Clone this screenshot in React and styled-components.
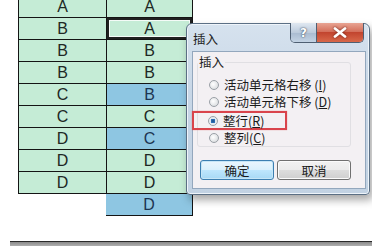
import React from "react";
import styled, { createGlobalStyle } from "styled-components";

const GlobalStyle = createGlobalStyle`
  html, body {
    margin: 0;
    padding: 0;
    background: #ffffff;
    overflow: hidden;
  }
  body {
    font-family: "Liberation Sans", Arial, sans-serif;
  }
`;

const col1 = ["A", "B", "B", "B", "C", "C", "D", "D", "D", null];
const col2 = [
  { v: "A" },
  { v: "A", active: true },
  { v: "B" },
  { v: "B" },
  { v: "B", blue: true },
  { v: "C" },
  { v: "C", blue: true },
  { v: "D" },
  { v: "D" },
  { v: "D", blue: true },
];

const radios = [
  { label: "活动单元格右移 ", key: "I" },
  { label: "活动单元格下移 ", key: "D" },
  { label: "整行", key: "R", checked: true },
  { label: "整列", key: "C" },
];

const App = () => {
  return (
    <>
      <GlobalStyle />
      <Page>
        <Sheet>
          <Grid>
            {col1.map((v, i) => (
              <React.Fragment key={i}>
                {v ? <Cell $first>{v}</Cell> : <Empty />}
                <Cell
                  $blue={col2[i].blue}
                  $active={col2[i].active}
                  $lone={!v}
                >
                  {col2[i].v}
                </Cell>
              </React.Fragment>
            ))}
          </Grid>
        </Sheet>
        <BottomRule />

        <Dialog>
          <TitleText>插入</TitleText>
          <Caption>
            <HelpBtn>?</HelpBtn>
            <CloseBtn>
              <svg width="14" height="11" viewBox="0 0 14 11">
                <path
                  d="M2 1.5 L12 9.5 M12 1.5 L2 9.5"
                  stroke="#ffffff"
                  strokeWidth="2.8"
                  strokeLinecap="round"
                />
              </svg>
            </CloseBtn>
          </Caption>
          <Client>
            <GroupBox>
              <Legend>插入</Legend>
              <RadioList>
                {radios.map((r) => (
                  <RadioRow key={r.key} $hl={r.checked}>
                    <RadioDot $checked={r.checked} />
                    <RadioText>
                      {r.label}(<u>{r.key}</u>)
                    </RadioText>
                  </RadioRow>
                ))}
              </RadioList>
            </GroupBox>
            <Buttons>
              <PushButton $default>确定</PushButton>
              <PushButton>取消</PushButton>
            </Buttons>
          </Client>
        </Dialog>
      </Page>
    </>
  );
};

const Page = styled.div`
  position: relative;
  width: 372px;
  height: 246px;
  overflow: hidden;
`;

const Sheet = styled.div`
  padding-left: 18px;
  margin-top: -4px;
`;

const Grid = styled.div`
  display: grid;
  grid-template-columns: 89px 86px;
  grid-auto-rows: 22px;
`;

const Empty = styled.div``;

const Cell = styled.div`
  box-sizing: border-box;
  display: flex;
  align-items: center;
  justify-content: center;
  padding-top: 1px;
  font-size: 16px;
  line-height: 18px;
  color: ${(p) => (p.$blue ? "#1d3552" : "#202824")};
  background: ${(p) => (p.$blue ? "#8ec6e2" : "#c5ecd6")};
  border-bottom: 1px solid #141414;
  border-right: 1px solid #141414;
  border-left: ${(p) => (p.$first ? "1px solid #141414" : "none")};
  margin-left: ${(p) => (p.$lone ? "-1px" : "0")};
  box-shadow: ${(p) =>
    p.$active ? "inset 0 0 0 2px #202020, inset 0 0 0 3px #f4fbf7" : "none"};
`;

const BottomRule = styled.div`
  position: absolute;
  left: 10px;
  right: 0;
  top: 241px;
  height: 5px;
  border-top: 1px solid #2a2a2a;
  background: linear-gradient(#8a8a8a, #b8b8b8);
`;

const Dialog = styled.div`
  position: absolute;
  left: 186px;
  top: 23px;
  width: 184px;
  height: 172px;
  box-sizing: border-box;
  border: 1px solid #5b6f84;
  border-radius: 6px 6px 4px 4px;
  background: linear-gradient(180deg, #d6e2ee 0%, #c8d7e7 40%, #c2d2e3 100%);
  box-shadow: 3px 5px 8px rgba(0, 0, 0, 0.35), inset 0 0 0 1px #eef4fa;
  font-family: "Noto Sans CJK SC", "Noto Sans", sans-serif;
`;

const TitleText = styled.div`
  position: absolute;
  left: 6px;
  top: 5px;
  font-size: 12.5px;
  color: #1e1e1e;
`;

const Caption = styled.div`
  position: absolute;
  top: -1px;
  right: 5px;
  display: flex;
  border: 1px solid #4e5f72;
  border-top: none;
  border-radius: 0 0 5px 5px;
  overflow: hidden;
`;

const HelpBtn = styled.div`
  width: 25px;
  height: 19px;
  display: flex;
  align-items: center;
  justify-content: center;
  font-family: "DejaVu Sans", sans-serif;
  font-weight: bold;
  font-size: 12px;
  color: #ffffff;
  text-shadow: 0 0 2px #3e5066, 0 0 1px #3e5066;
  background: linear-gradient(180deg, #e0e8f1 0%, #bccbdc 50%, #a9bbd0 51%, #c3d3e4 100%);
  border-right: 1px solid #4e5f72;
`;

const CloseBtn = styled.div`
  width: 46px;
  height: 19px;
  display: flex;
  align-items: center;
  justify-content: center;
  background: linear-gradient(180deg, #e8a493 0%, #d4705c 45%, #c2452f 50%, #d8684a 100%);
  svg {
    filter: drop-shadow(0 0 1px #6b1d12);
  }
`;

const Client = styled.div`
  position: absolute;
  left: 5px;
  top: 27px;
  right: 3px;
  bottom: 5px;
  box-sizing: border-box;
  border: 1px solid #93a7bd;
  background: #f3f0f3;
  padding: 3px 14px 0 4px;
  display: flex;
  flex-direction: column;
`;

const GroupBox = styled.fieldset`
  margin: 0;
  padding: 0;
  border: 1px solid #e0dfe3;
  border-radius: 3px;
  height: 92px;
  box-sizing: border-box;
`;

const Legend = styled.legend`
  font-size: 12.5px;
  color: #1e1e1e;
  padding: 0 1px;
  margin-left: 0;
  line-height: 14px;
`;

const RadioList = styled.div`
  display: flex;
  flex-direction: column;
  padding-top: 7px;
`;

const RadioRow = styled.div`
  display: flex;
  align-items: center;
  gap: 5px;
  box-sizing: border-box;
  height: ${(p) => (p.$hl ? "19px" : "17px")};
  margin: ${(p) => (p.$hl ? "1px 0 -1px -6px" : "0")};
  padding-left: ${(p) => (p.$hl ? "14px" : "11px")};
  width: ${(p) => (p.$hl ? "95px" : "auto")};
  border: ${(p) => (p.$hl ? "2px solid #d9444c" : "none")};
  box-shadow: ${(p) => (p.$hl ? "0 0 1px rgba(217,68,76,0.6)" : "none")};
`;

const RadioDot = styled.span`
  width: 10px;
  height: 10px;
  border-radius: 50%;
  box-sizing: border-box;
  border: 1px solid #9aa0a6;
  background: ${(p) =>
    p.$checked
      ? "radial-gradient(circle, #1d4e86 0%, #2f74bd 38%, #dfe7ef 42%, #f4f6f8 100%)"
      : "radial-gradient(circle at 40% 40%, #ffffff 0%, #e4e6e8 60%, #cfd3d6 100%)"};
  flex-shrink: 0;
`;

const RadioText = styled.span`
  font-size: 12.5px;
  line-height: 15px;
  color: #1b1b1b;
  white-space: nowrap;
  u {
    text-underline-offset: 1px;
  }
`;

const Buttons = styled.div`
  display: flex;
  justify-content: space-between;
  padding: 13px 0 0 3px;
`;

const PushButton = styled.div`
  width: 74px;
  height: 20px;
  box-sizing: border-box;
  display: flex;
  align-items: center;
  justify-content: center;
  font-size: 12.5px;
  line-height: 15px;
  color: #1b1b1b;
  border-radius: 3px;
  border: 1px solid ${(p) => (p.$default ? "#3c7fb1" : "#707070")};
  background: ${(p) =>
    p.$default
      ? "linear-gradient(180deg, #eaf6fd 0%, #d9f0fc 50%, #bee6fd 51%, #a7d9f5 100%)"
      : "linear-gradient(180deg, #f2f2f2 0%, #ebebeb 50%, #dddddd 51%, #cfcfcf 100%)"};
  box-shadow: inset 0 0 0 1px ${(p) => (p.$default ? "#c6e6f7" : "#fbfbfb")};
`;

export default App;
